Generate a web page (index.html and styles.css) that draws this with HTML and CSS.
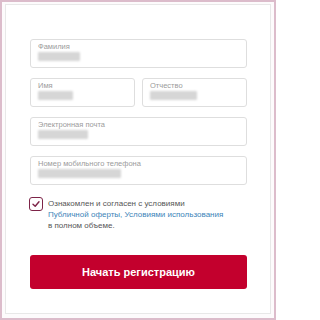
FILE: index.html
```html
<!DOCTYPE html>
<html lang="ru">
<head>
<meta charset="utf-8">
<link rel="stylesheet" href="styles.css">
</head>
<body>
<div class="frame">
  <div class="card">
    <form class="form">
      <div class="field">
        <div class="label">Фамилия</div>
        <div class="value" style="width:42px"></div>
      </div>
      <div class="row">
        <div class="field">
          <div class="label">Имя</div>
          <div class="value" style="width:35px"></div>
        </div>
        <div class="field">
          <div class="label">Отчество</div>
          <div class="value" style="width:47px"></div>
        </div>
      </div>
      <div class="field">
        <div class="label">Электронная почта</div>
        <div class="value" style="width:50px"></div>
      </div>
      <div class="field">
        <div class="label">Номер мобильного телефона</div>
        <div class="value" style="width:83px"></div>
      </div>
      <div class="agree">
        <span class="checkbox">
          <svg width="10" height="10" viewBox="0 0 10 10"><path d="M2 5.2 L4.2 7.3 L8 2.8" fill="none" stroke="#7d2448" stroke-width="1.4" stroke-linecap="round" stroke-linejoin="round"/></svg>
        </span>
        <p class="agree-text">Ознакомлен и согласен с условиями<br><a class="link" href="#">Публичной оферты, Условиями использования</a><br>в полном объеме.</p>
      </div>
      <button class="submit" type="button">Начать регистрацию</button>
    </form>
  </div>
</div>
</body>
</html>
```

FILE: styles.css
```css
html, body {
  margin: 0;
  padding: 0;
  background: #ffffff;
}
body {
  width: 276px;
  height: 320px;
  font-family: "Liberation Sans", Arial, sans-serif;
}
.frame {
  box-sizing: border-box;
  width: 276px;
  height: 320px;
  border: 2px solid #dcbccb;
  padding: 2px 3px 4px 3px;
  background: #fdfbfc;
}
.card {
  box-sizing: border-box;
  width: 266px;
  height: 310px;
  border: 1px solid #e8e8e8;
  background: #ffffff;
  padding: 34px 23px 0 24px;
}
.form {
  display: flex;
  flex-direction: column;
  gap: 10px;
  margin: 0;
}
.row {
  display: grid;
  grid-template-columns: 105px 105px;
  gap: 7px;
}
.field {
  box-sizing: border-box;
  height: 29px;
  border: 1px solid #dedede;
  border-radius: 3px;
  padding: 2px 7px 0 7px;
}
.label {
  font-size: 7.5px;
  line-height: 9px;
  color: #9b9b9b;
  white-space: nowrap;
}
.value {
  height: 9px;
  margin-top: 1px;
  background: #d6d6d6;
  border-radius: 1px;
  filter: blur(0.8px);
}
.agree {
  display: flex;
  align-items: flex-start;
  gap: 5px;
  margin-top: 2px;
}
.checkbox {
  box-sizing: border-box;
  flex: none;
  width: 14px;
  height: 14px;
  border: 1.5px solid #7d2448;
  border-radius: 3px;
  display: flex;
  align-items: center;
  justify-content: center;
  margin-left: -1px;
}
.agree-text {
  margin: 1px 0 0 0;
  font-size: 8px;
  line-height: 11px;
  color: #555555;
}
.link {
  color: #3c84b8;
  text-decoration: none;
}
.submit {
  margin-top: 14px;
  height: 34px;
  border: none;
  border-radius: 3px;
  background: #c3002d;
  color: #ffffff;
  font-family: "Liberation Sans", Arial, sans-serif;
  font-weight: bold;
  font-size: 11px;
  padding: 0;
}
```
